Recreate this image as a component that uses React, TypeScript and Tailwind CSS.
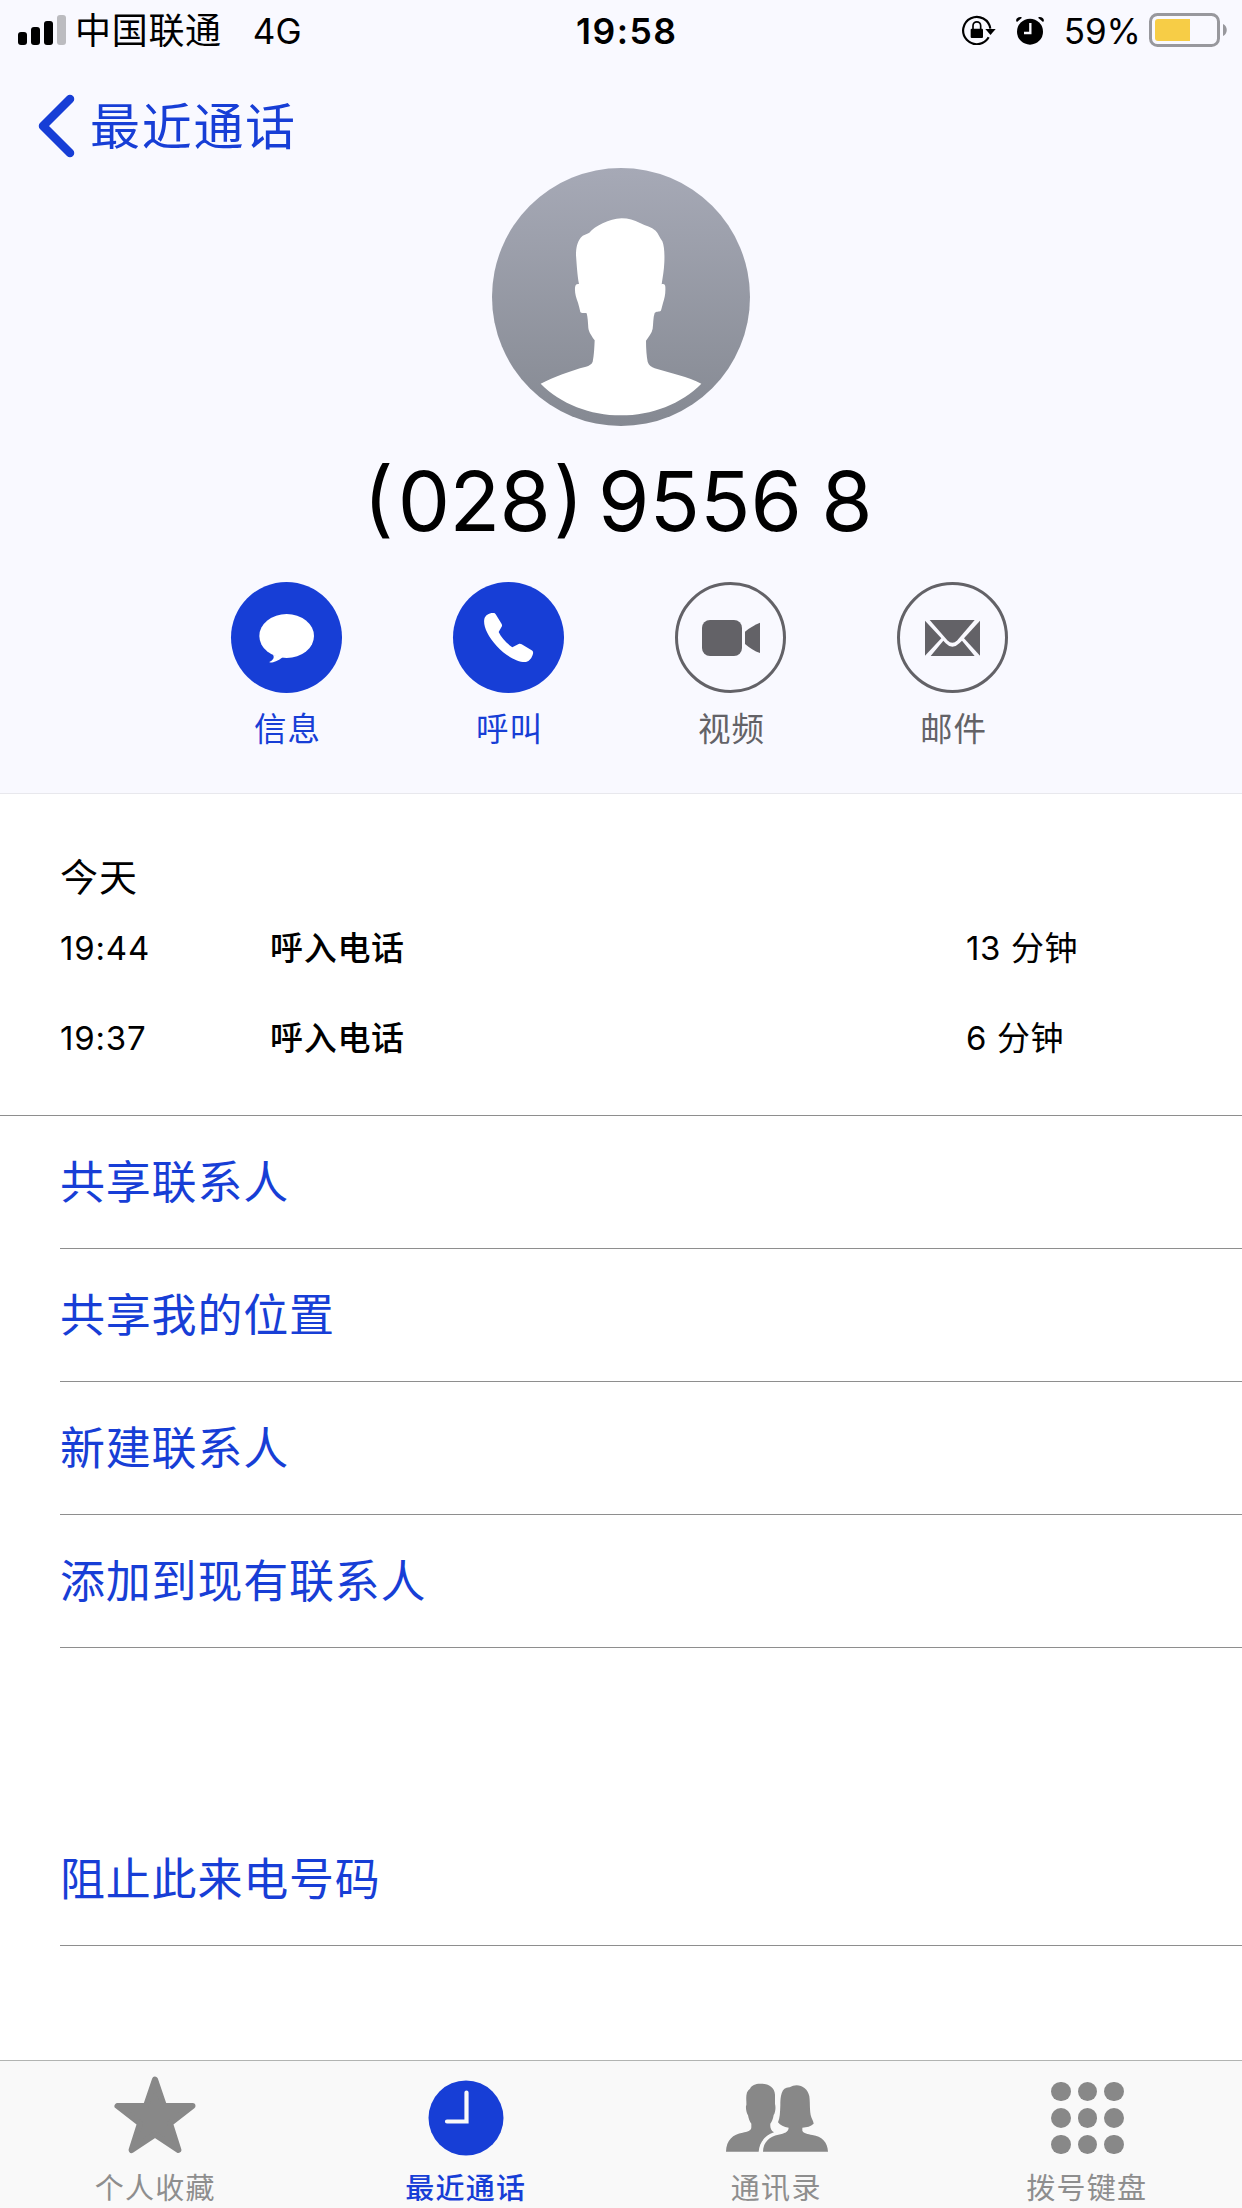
import type { ReactNode } from "react";
import clsx from "clsx";

interface ContactAction {
  label: string;
  enabled: boolean;
  icon: ReactNode;
}

interface CallEntry {
  time: string;
  kind: string;
  duration: string;
}

interface TabItem {
  label: string;
  active?: boolean;
  icon: ReactNode;
}

function SignalIcon() {
  return (
    <svg width="48" height="30" viewBox="0 0 48 30" className="shrink-0">
      <rect x="0" y="17" width="9" height="13" rx="3" />
      <rect x="13" y="12" width="9" height="18" rx="3" />
      <rect x="26" y="6" width="9" height="24" rx="3" />
      <rect x="39" y="0" width="9" height="30" rx="3" fill="#bcbcc0" />
    </svg>
  );
}

function RotationLockIcon() {
  return (
    <svg width="34" height="30" viewBox="66 45 102 90" className="shrink-0">
      <path d="M151 86A41 41 0 1 0 146 112" fill="none" stroke="#000" strokeWidth="6.500" />
      <path d="M136 87h31l-15.500 18z" />
      <rect x="92" y="86" width="37" height="28" rx="3" />
      <path d="M99 88v-11a11.500 11.500 0 0 1 23 0v11" fill="none" stroke="#000" strokeWidth="5" />
    </svg>
  );
}

function AlarmIcon() {
  return (
    <svg width="28" height="29" viewBox="228 46 84 87" className="shrink-0">
      <circle cx="270" cy="93" r="39" />
      <path d="M229 62c-3-8 6-15 15-13l1 3-14 12z" />
      <path d="M311 62c3-8-6-15-15-13l-1 3 14 12z" />
      <path d="M271 67v30h-19" fill="none" stroke="#f9f9ff" strokeWidth="7" />
    </svg>
  );
}

function BatteryIcon() {
  return (
    <svg width="79" height="34" viewBox="0 0 79 34" className="shrink-0">
      <rect x="1.500" y="1.500" width="68" height="31" rx="7" fill="none" stroke="#98989d" strokeWidth="3" />
      <path d="M6 9a3 3 0 0 1 3-3H41V28H9a3 3 0 0 1-3-3z" fill="#f7cd46" />
      <path d="M74 11c5 2 5 10 0 12z" fill="#98989d" />
    </svg>
  );
}

function Avatar() {
  return (
    <svg width="258" height="258" viewBox="36 23 774 774">
      <defs>
        <linearGradient id="avatar-bg" x1="0" y1="0" x2="0" y2="1">
          <stop offset="0" stopColor="#a6a9b6" />
          <stop offset="1" stopColor="#858992" />
        </linearGradient>
      </defs>
      <circle cx="423" cy="410" r="387" fill="url(#avatar-bg)" />
      <path
        fill="#fff"
        d="M425 174C446 174 462 179 480 188C498 197 514 200 527 211C535 219 539 232 547 243C553 258 554 282 553 306C552 332 548 350 545 372C551 369 556 372 556 380C557 400 554 412 549 428C546 438 545 447 542 452C537 455 529 452 524 458C519 472 520 492 518 505C516 518 505 530 498 541C498 566 500 588 503 604C506 615 515 620 524 624C572 638 625 650 664 670C604 731 515 765 423 765C331 765 242 731 182 670C222 650 270 631 318 619C327 616 336 611 338 604C342 586 343 562 344 540C336 529 326 515 325 503C324 486 323 470 320 459C314 456 304 460 301 455C299 446 297 437 294 427C288 412 284 398 285 382C286 372 290 370 297 371C292 346 290 312 288 285C288 262 292 245 302 232C310 222 320 222 328 217C336 208 350 197 368 189C388 181 404 174 425 174Z"
      />
    </svg>
  );
}

function MessageIcon() {
  return (
    <svg width="111" height="111" viewBox="63 36 333 333" fill="#fff">
      <ellipse cx="230" cy="198" rx="82" ry="66" />
      <path d="M189 254C194 262 190 270 178 276C180 280 198 278 218 262Z" />
    </svg>
  );
}

function PhoneIcon() {
  return (
    <svg width="111" height="111" viewBox="729 36 333 333" fill="#fff">
      <path d="M823 147C825 136 838 128 851 129C854 129 856 131 858 134L875 162C877 166 876 169 874 172L866 186C873 202 890 220 907 232L926 222C929 221 932 221 935 223L965 241C969 243 970 247 969 251C966 263 959 273 948 276C928 279 889 260 860 228C832 197 819 168 823 147Z" />
    </svg>
  );
}

function VideoIcon() {
  return (
    <svg width="105" height="105" viewBox="84 45 315 315" fill="#636267">
      <rect x="156" y="150" width="120" height="108" rx="24" />
      <path d="M285 185C298 174 314 164 330 158V249C314 244 298 234 285 222Z" />
    </svg>
  );
}

function MailIcon() {
  return (
    <svg width="105" height="105" viewBox="750 45 315 315" fill="#636267">
      <path d="M839 150H974L922 211Q907 226 892 211Z" />
      <path d="M825 152L874 205L825 257Z" />
      <path d="M990 152L942 205L990 257Z" />
      <path d="M842 258L880 212L887 220Q907 241 928 220L936 212L974 258Z" />
    </svg>
  );
}

function StarIcon() {
  return (
    <svg
      width="84"
      height="78"
      viewBox="0 0 84 78"
      fill="#888"
      stroke="#888"
      strokeWidth="6"
      strokeLinejoin="round"
      className="mb-[5px]"
    >
      <path d="M42 3.500L51 30H79.500L57 47.500L65.400 74L42 58.500L18.600 74L27 47.500L4.500 30H33Z" />
    </svg>
  );
}

function ClockIcon() {
  return (
    <svg width="76" height="76" viewBox="0 0 76 76" className="mt-[2px]">
      <circle cx="38" cy="38" r="37.500" fill="#173ed6" />
      <path d="M38.500 12.500V41.500H19" fill="none" stroke="#f9f9f9" strokeWidth="4.200" strokeLinecap="round" />
    </svg>
  );
}

function ContactsIcon() {
  return (
    <svg width="102" height="69" viewBox="48 37 306 207" fill="#888" className="ml-[2px]">
      <path d="M48 243C49 208 69 190 98 186C112 184 124 180 124 170V159C119 153 116 145 114 134C110 128 107 116 108 106C110 102 109 100 109 92C108 74 109 61 120 54C125 43 139 38 153 39C176 39 194 50 195 72V100C198 110 196 126 191 133C189 145 186 153 181 159C180 169 182 178 192 185C166 194 148 214 146 243Z" />
      <path d="M159 243C160 213 179 197 205 192C224 188 235 184 236 171C222 169 210 164 204 155C210 142 210 126 211 104C211 77 214 49 239 50C262 35 293 48 298 77C301 98 298 122 304 140C307 147 310 153 311 159C302 167 291 170 277 171V180C281 188 293 190 307 193C335 197 353 214 354 243Z" />
    </svg>
  );
}

function KeypadIcon() {
  return (
    <div className="ml-px mt-[2px] grid grid-cols-3 gap-[7px]">
      {Array.from({ length: 9 }, (_, i) => (
        <span key={i} className="size-[19.500px] rounded-full bg-[#888]" />
      ))}
    </div>
  );
}

const actions: ContactAction[] = [
  { label: "信息", enabled: true, icon: <MessageIcon /> },
  { label: "呼叫", enabled: true, icon: <PhoneIcon /> },
  { label: "视频", enabled: false, icon: <VideoIcon /> },
  { label: "邮件", enabled: false, icon: <MailIcon /> },
];

const calls: CallEntry[] = [
  { time: "19:44", kind: "呼入电话", duration: "13 分钟" },
  { time: "19:37", kind: "呼入电话", duration: "6 分钟" },
];

const menuItems = ["共享联系人", "共享我的位置", "新建联系人", "添加到现有联系人"];

const tabs: TabItem[] = [
  { label: "个人收藏", icon: <StarIcon /> },
  { label: "最近通话", active: true, icon: <ClockIcon /> },
  { label: "通讯录", icon: <ContactsIcon /> },
  { label: "拨号键盘", icon: <KeypadIcon /> },
];

function StatusBar() {
  return (
    <div className="flex h-[60px] items-center pl-[18px] pr-[14px]">
      <div className="flex w-[558px] items-center">
        <SignalIcon />
        <span className="ml-[9px] pt-[3px] text-[36px] leading-[57px] tracking-[0.700px]">中国联通</span>
        <span className="ml-[31px] pt-[3px] text-[35px] leading-[57px]">4G</span>
      </div>
      <span className="pt-[3px] text-[35.500px] font-semibold leading-[57px] tracking-[1.500px]">19:58</span>
      <div className="ml-auto flex items-center">
        <RotationLockIcon />
        <span className="ml-[20px] flex">
          <AlarmIcon />
        </span>
        <span className="ml-[20px] mr-[8px] pt-[3px] text-[35px] leading-[57px]">59%</span>
        <BatteryIcon />
      </div>
    </div>
  );
}

function ActionButton({ label, enabled, icon }: ContactAction) {
  return (
    <button type="button" className="flex w-[111px] flex-col items-center">
      <span
        className={clsx(
          "flex size-[111px] items-center justify-center rounded-full",
          enabled ? "bg-[#173ed6]" : "border-[3px] border-[#636267]"
        )}
      >
        {icon}
      </span>
      <span
        className={clsx(
          "mt-[13px] whitespace-nowrap pl-[2px] text-[32.500px] leading-[48px] tracking-[1px]",
          enabled ? "text-[#173ed6]" : "text-[#636267]"
        )}
      >
        {label}
      </span>
    </button>
  );
}

function MenuRow({ label }: { label: string }) {
  return (
    <button
      type="button"
      className="flex h-[133px] items-center border-b border-[#8e8e8e] pt-[2px] text-left text-[45px] leading-[66px] tracking-[0.800px] text-[#173ed6]"
    >
      {label}
    </button>
  );
}

export default function App() {
  return (
    <div className="flex h-[2208px] w-[1242px] flex-col overflow-hidden bg-white font-['Inter','Noto_Sans_CJK_SC',sans-serif] text-black">
      <header className="flex h-[794px] shrink-0 flex-col border-b border-[#e8e8ed] bg-[#f9f9ff]">
        <StatusBar />
        <button type="button" className="flex h-[108px] items-center pl-[37px] text-[#173ed6]">
          <svg width="38" height="64" viewBox="0 0 38 64" className="mt-[24px]">
            <path d="M33 5L6 32L33 59" fill="none" stroke="currentColor" strokeWidth="8.500" strokeLinecap="round" strokeLinejoin="round" />
          </svg>
          <span className="ml-[15px] mt-[26px] text-[50px] leading-[72px] tracking-[1.700px]">最近通话</span>
        </button>
        <div className="flex flex-col items-center">
          <Avatar />
          <h1 className="mt-[23px] pr-[6px] text-[83px] font-normal leading-[104px] [font-feature-settings:'case']">
            <span className="tracking-[4px]">(</span>
            <span className="tracking-[-0.500px]">028</span>
            <span className="ml-[3px] [word-spacing:-9px]">) 9556</span>
            <span className="[word-spacing:-4px]"> 8</span>
          </h1>
        </div>
        <div className="mt-[29px] flex justify-center gap-[111px] pr-[3px]">
          {actions.map((action) => (
            <ActionButton key={action.label} {...action} />
          ))}
        </div>
      </header>

      <section className="h-[322px] shrink-0 border-b border-[#8e8e8e] pl-[60px] pt-[57px]">
        <h2 className="text-[38px] leading-[52px] tracking-[1px]">今天</h2>
        <ul>
          {calls.map((call) => (
            <li key={call.time} className="flex h-[90px] items-center text-[33px] leading-[48px]">
              <span className="w-[210px] tracking-[0.800px]">{call.time}</span>
              <span className="w-[696px] font-medium tracking-[0.700px]">{call.kind}</span>
              <span className="tracking-[0.600px]">{call.duration}</span>
            </li>
          ))}
        </ul>
      </section>

      <nav className="flex flex-col pl-[60px]">
        {menuItems.map((item) => (
          <MenuRow key={item} label={item} />
        ))}
        <div className="h-[165px]" />
        <MenuRow label="阻止此来电号码" />
      </nav>

      <footer className="mt-auto grid h-[148px] shrink-0 grid-cols-4 border-t border-[#b2b4b2] bg-[#f9f9f9]">
        {tabs.map((tab) => (
          <button
            key={tab.label}
            type="button"
            className={clsx(
              "flex flex-col items-center",
              tab.active ? "font-medium text-[#173ed6]" : "text-[#8e8e8e]"
            )}
          >
            <span className="flex h-[112px] items-center justify-center">{tab.icon}</span>
            <span className="text-[29px] leading-[32px] tracking-[1.300px]">{tab.label}</span>
          </button>
        ))}
      </footer>
    </div>
  );
}
